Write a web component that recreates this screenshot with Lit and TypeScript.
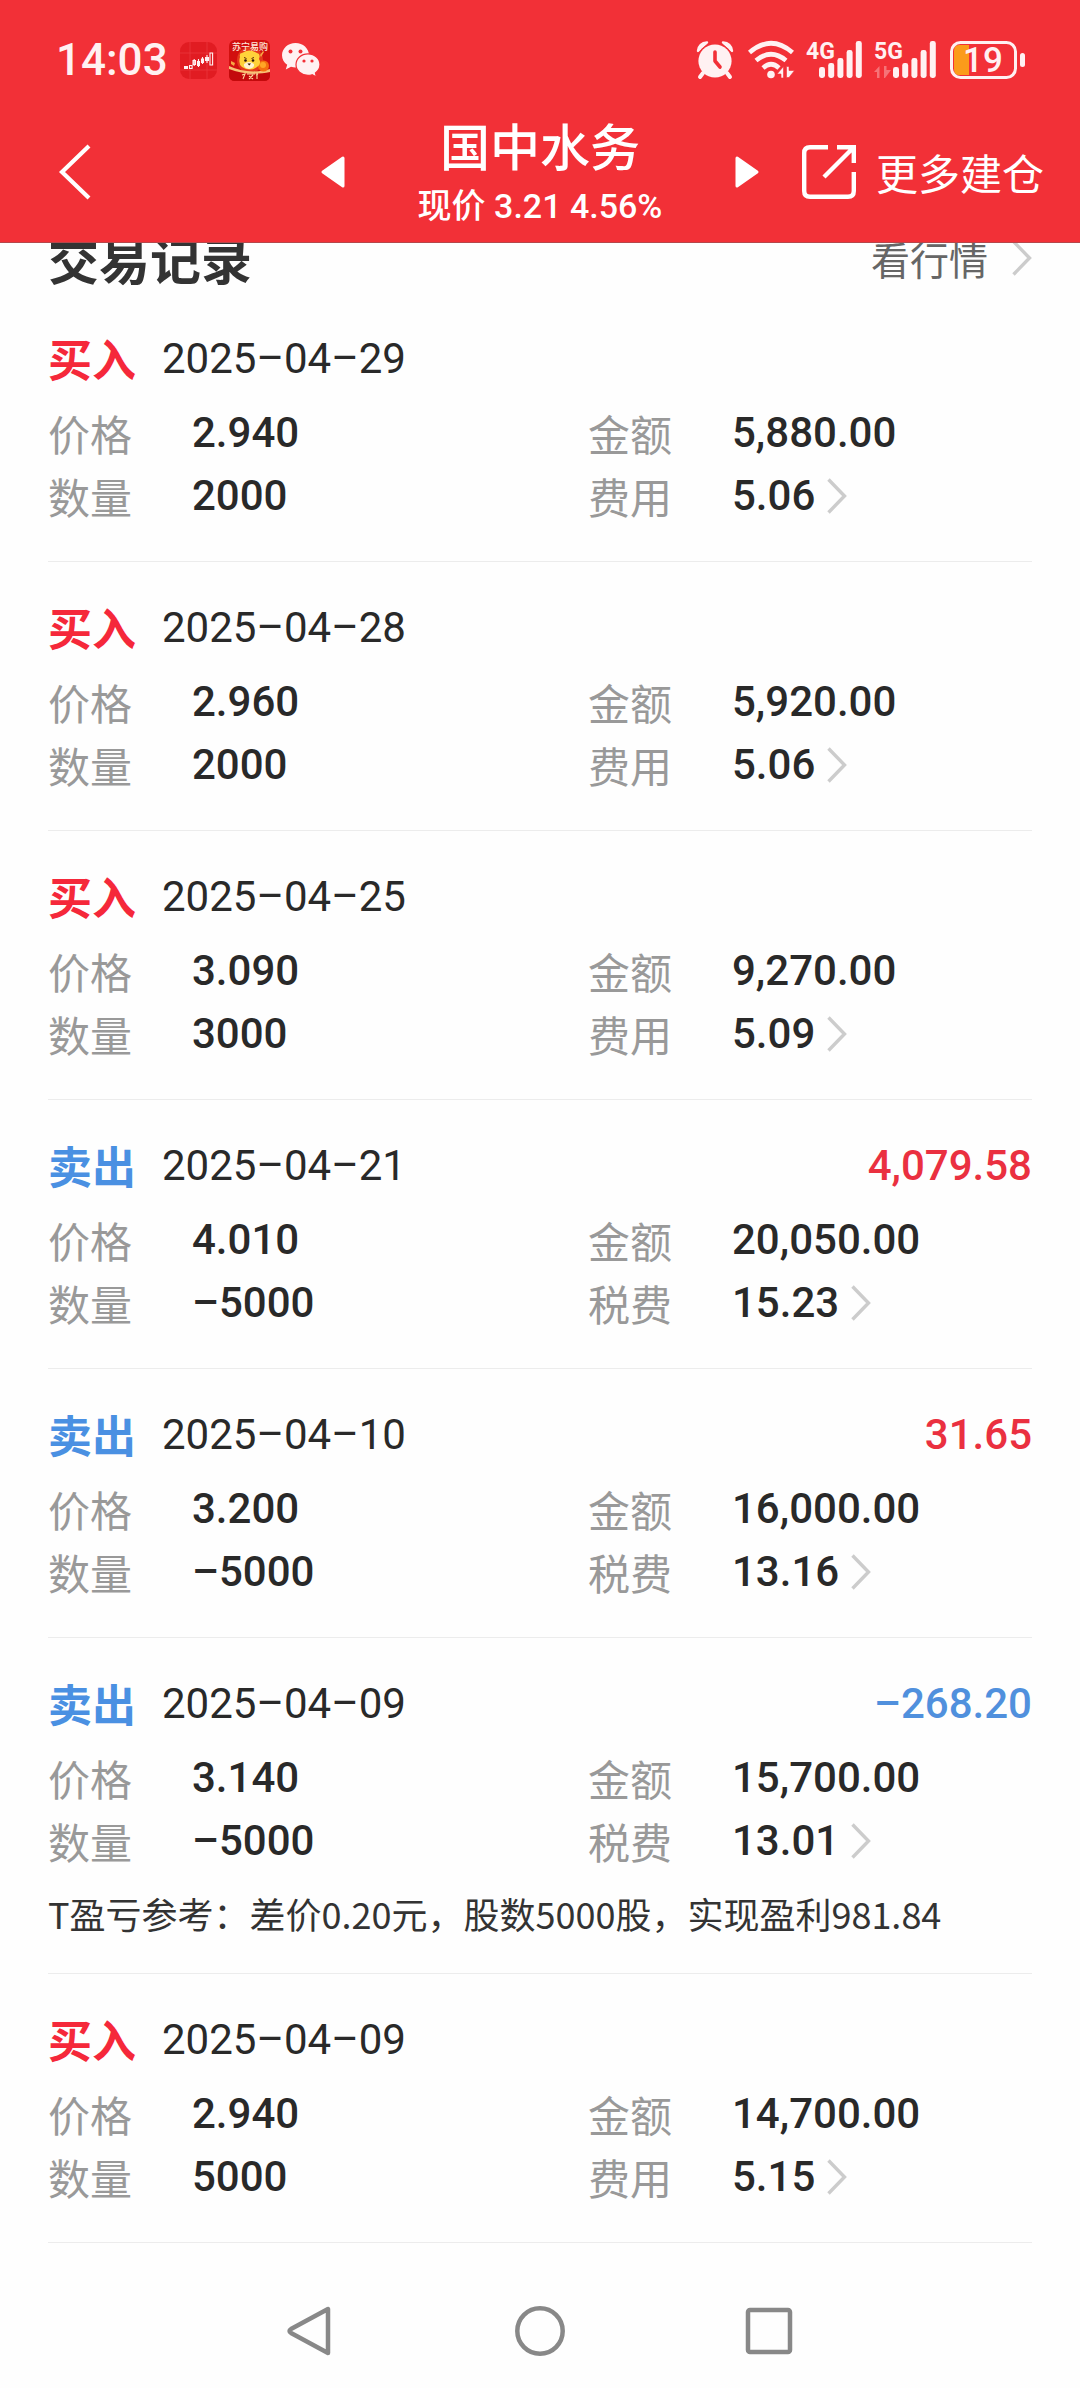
import { LitElement, html, css, svg, nothing } from "lit";
import { customElement, property } from "lit/decorators.js";
import { classMap } from "lit/directives/class-map.js";

interface Trade {
  side: "buy" | "sell";
  date: string;
  price: string;
  amount: string;
  quantity: string;
  fee: string;
  profit?: string;
  note?: string;
}

const TRADES: Trade[] = [
  { side: "buy", date: "2025–04–29", price: "2.940", amount: "5,880.00", quantity: "2000", fee: "5.06" },
  { side: "buy", date: "2025–04–28", price: "2.960", amount: "5,920.00", quantity: "2000", fee: "5.06" },
  { side: "buy", date: "2025–04–25", price: "3.090", amount: "9,270.00", quantity: "3000", fee: "5.09" },
  { side: "sell", date: "2025–04–21", price: "4.010", amount: "20,050.00", quantity: "–5000", fee: "15.23", profit: "4,079.58" },
  { side: "sell", date: "2025–04–10", price: "3.200", amount: "16,000.00", quantity: "–5000", fee: "13.16", profit: "31.65" },
  {
    side: "sell",
    date: "2025–04–09",
    price: "3.140",
    amount: "15,700.00",
    quantity: "–5000",
    fee: "13.01",
    profit: "–268.20",
    note: "T盈亏参考：差价0.20元，股数5000股，实现盈利981.84",
  },
  { side: "buy", date: "2025–04–09", price: "2.940", amount: "14,700.00", quantity: "5000", fee: "5.15" },
];

const chevron = () => html`
  <svg class="chevron" width="20" height="36" viewBox="0 0 20 36" aria-hidden="true">
    <path d="M1.5 1.5L17.5 18L1.5 34.5" fill="none" stroke="#ccc" stroke-width="3.4" />
  </svg>
`;

const signalBars = (x: number) =>
  [11, 15, 20, 28, 37].map(
    (h, i) => svg`<rect x=${x + i * 9.2} y=${37 - h} width="6" height=${h} rx="2.4" />`,
  );

@customElement("status-bar")
export class StatusBar extends LitElement {
  static styles = css`
    :host {
      display: flex;
      align-items: center;
      height: 109px;
      padding: 11px 54px 0 56px;
      box-sizing: border-box;
      color: #fff1f2;
      fill: currentColor;
      font-family: Roboto, "Noto Sans CJK SC", sans-serif;
    }
    svg {
      display: block;
      flex: none;
      overflow: visible;
    }
    .clock {
      font-size: 44px;
      line-height: 52px;
      font-weight: 500;
    }
    .group {
      display: flex;
      align-items: center;
      gap: 12px;
    }
    .apps {
      margin-left: 12px;
    }
    .system {
      margin-left: auto;
    }
    .small {
      font-size: 23px;
      font-weight: 700;
    }
    .level {
      font-size: 35px;
      font-weight: 500;
    }
    .brand {
      font-family: "Noto Sans CJK SC", sans-serif;
      font-size: 9px;
      font-weight: 500;
    }
  `;

  render() {
    return html`
      <span class="clock">14:03</span>
      <div class="group apps">
        <svg width="37" height="37" viewBox="0 0 37 37" aria-hidden="true">
          <rect width="37" height="37" rx="9" fill="#e11c22" />
          <path d="M10 0V37M27 0V37M0 11H37M0 28H37" stroke="#ec3a3f" stroke-width="0.7" />
          <path d="M4 24h4v3h-4zM17 19h3v5h-3zM25 15h4v4h-4z" />
          <path d="M9.5 23.5h2.6v3h-2.6zM13 18.5h2.5v4h-2.5zM14.2 17v7M18.5 17v8M21.5 17h2v3.5h-2zM22.5 15v7M27 13v8M30 11h2.6v12h-2.6z" fill="none" stroke="#fff1f2" stroke-width="1.1" />
        </svg>
        <svg width="41" height="41" viewBox="0 0 41 41" aria-hidden="true">
          <rect width="41" height="41" rx="6" fill="#d2100f" />
          <circle cx="21" cy="20" r="13" fill="#e43a1c" />
          <path d="M0 27C12 33 28 33 41 29V35Q41 41 35 41H6Q0 41 0 35Z" fill="#c30a0c" />
          <path d="M0 26C12 32 28 33 41 29V32C28 35 12 34 0 29Z" fill="#f8c274" />
          <circle cx="34.5" cy="26" r="5.5" fill="#f4700f" />
          <circle cx="34" cy="25" r="3" fill="#ffa526" />
          <path d="M2 21l4 2-1 3-3-2zM31 15l3-4 1 1-3 5z" fill="#f7a744" />
          <path d="M11 17Q10 13 13 13Q20 8 28 13Q32 14 30 19Q33 24 28 27Q21 32 13 27Q9 24 11 17Z" fill="#ffd23a" />
          <path d="M15 24Q20 20 25 24Q26 28 20 29Q14 28 15 24Z" fill="#fff3d2" />
          <path d="M15 17.5l2.5 1M25 17.5l-2.5 1" stroke="#5b2a06" stroke-width="1" />
          <circle cx="16.5" cy="20.5" r="1.3" fill="#2c1508" />
          <circle cx="24" cy="20.5" r="1.3" fill="#2c1508" />
          <path d="M18.5 23.5h3.5l-1.8 2z" fill="#2c1508" />
          <text class="brand" x="3" y="10" fill="#ffe9dc">苏宁易购</text>
          <path d="M13 35l3-1-2 5M18 34h8M20 36l4 3M24 35l-4 4M27 35l2-1M28 33v6" fill="none" stroke="#ffd79b" stroke-width="1.1" />
        </svg>
        <svg width="38" height="34" viewBox="0 0 38 34" aria-hidden="true">
          <path d="M13.5 0C6 0 0 5.5 0 12.3C0 16.3 2 19.6 5.2 21.8L3.8 26.6L9 23.8C10.4 24.2 12 24.5 13.5 24.5C21 24.5 27 19 27 12.3C27 5.5 21 0 13.5 0Z" />
          <path d="M26 10.8C19.2 10.8 14 15.6 14 21.6C14 27.6 19.2 32.3 26 32.3C27.5 32.3 28.8 32.1 30.1 31.7L34.5 34L33.4 30.1C36.2 28.1 38 25.1 38 21.6C38 15.6 32.8 10.8 26 10.8Z" stroke="#f23037" stroke-width="1.2" />
          <circle cx="8.5" cy="8.5" r="2" fill="#f23037" />
          <circle cx="18.5" cy="8.5" r="2" fill="#f23037" />
          <circle cx="22" cy="18" r="1.6" fill="#f23037" />
          <circle cx="30" cy="18" r="1.6" fill="#f23037" />
        </svg>
      </div>
      <div class="group system">
        <svg width="40" height="38" viewBox="0 0 40 38" aria-hidden="true">
          <path d="M2 10Q3 2 11 1.5Z" stroke="currentColor" stroke-width="2.4" stroke-linejoin="round" />
          <path d="M36 10Q35 2 27 1.5Z" stroke="currentColor" stroke-width="2.4" stroke-linejoin="round" />
          <circle cx="19" cy="20" r="18" fill="#f23037" />
          <path d="M7 32L4 36M31 32L34 36" stroke="currentColor" stroke-width="4" stroke-linecap="round" />
          <circle cx="19" cy="20" r="16.6" />
          <path d="M19 11V20L24 26" fill="none" stroke="#f23037" stroke-width="3.6" stroke-linecap="round" stroke-linejoin="round" />
        </svg>
        <svg width="46" height="38" viewBox="0 0 46 38" aria-hidden="true">
          <g fill="none" stroke="currentColor" stroke-width="4.6">
            <path d="M1.5 11.5Q23 -7 44.5 11.5" />
            <path d="M8 19.5Q23 7 38 19.5" />
            <path d="M15 27Q23 19.5 31 27" />
          </g>
          <circle cx="23" cy="33.5" r="3.8" />
          <path d="M29 33L35.5 25.5V37H33V33ZM38.5 25.5H41V29.5H46.5L41 36.5H38.5Z" stroke="#f23037" stroke-width="0.6" />
        </svg>
        <svg width="56" height="38" viewBox="0 0 56 38" aria-label="4G">
          <text class="small" x="0" y="18">4G</text>
          ${signalBars(13)}
        </svg>
        <svg width="64" height="38" viewBox="0 0 64 38" aria-label="5G">
          <text class="small" x="0" y="18">5G</text>
          <path d="M0 31L5.5 25V37H3V31ZM10 25H12.5V29H17L11 37H10Z" opacity="0.35" />
          ${signalBars(19)}
        </svg>
        <svg width="76" height="38" viewBox="0 0 76 38" aria-label="19%">
          <path d="M9 4H19V34H9Q4 34 4 28V10Q4 4 9 4Z" fill="#fb9b1b" />
          <rect x="1.5" y="1.5" width="64" height="35" rx="9" fill="none" stroke="currentColor" stroke-width="3" />
          <rect x="70" y="12" width="5" height="14" rx="2.5" />
          <text class="level" x="33" y="31" text-anchor="middle">19</text>
        </svg>
      </div>
    `;
  }
}

@customElement("stock-header")
export class StockHeader extends LitElement {
  static styles = css`
    :host {
      display: grid;
      grid-template-columns: 1fr auto 1fr;
      align-items: center;
      padding: 0 36px 8px;
      color: #fff;
      font-family: "Noto Sans CJK SC", sans-serif;
    }
    svg {
      display: block;
      flex: none;
    }
    button,
    a {
      display: flex;
      align-items: center;
      padding: 0;
      border: 0;
      background: none;
      color: inherit;
      font: inherit;
      text-decoration: none;
    }
    .back {
      padding: 0 22px;
    }
    .switcher {
      display: flex;
      align-items: center;
      gap: 73px;
    }
    .stock {
      text-align: center;
    }
    h1 {
      margin: 0;
      font-size: 50px;
      line-height: 70px;
      font-weight: 500;
    }
    p {
      margin: 0;
      font-family: Roboto, "Noto Sans CJK SC", sans-serif;
      font-size: 34px;
      line-height: 55px;
      font-weight: 500;
      white-space: nowrap;
    }
    .more {
      justify-self: end;
      gap: 20px;
      font-size: 42px;
      line-height: 60px;
      white-space: nowrap;
    }
  `;

  render() {
    return html`
      <button class="back" aria-label="返回">
        <svg width="34" height="56" viewBox="0 0 34 56">
          <path d="M31 2L4 28L31 54" fill="none" stroke="currentColor" stroke-width="4.2" />
        </svg>
      </button>
      <div class="switcher">
        <button aria-label="上一只">
          <svg width="24" height="32" viewBox="0 0 24 32">
            <path d="M2 16L22 2V30Z" fill="currentColor" stroke="currentColor" stroke-width="3" stroke-linejoin="round" />
          </svg>
        </button>
        <div class="stock">
          <h1>国中水务</h1>
          <p>现价 3.21 4.56%</p>
        </div>
        <button aria-label="下一只">
          <svg width="24" height="32" viewBox="0 0 24 32">
            <path d="M22 16L2 2V30Z" fill="currentColor" stroke="currentColor" stroke-width="3" stroke-linejoin="round" />
          </svg>
        </button>
      </div>
      <a class="more" href="#">
        <svg width="54" height="54" viewBox="0 0 54 54" fill="none" stroke="currentColor" stroke-width="4.4">
          <path d="M26 2.2H8Q2.2 2.2 2.2 8V46Q2.2 51.8 8 51.8H46Q51.8 51.8 51.8 46V27" />
          <path d="M35 2.2H51.8V18M51 3L22 32" />
        </svg>
        <span>更多建仓</span>
      </a>
    `;
  }
}

@customElement("trade-record")
export class TradeRecord extends LitElement {
  static styles = css`
    :host {
      display: block;
      padding: 34px 0;
      border-bottom: 1px solid #ececec;
      color: #292929;
      font-family: Roboto, "Noto Sans CJK SC", sans-serif;
      font-size: 42px;
      line-height: 63px;
    }
    h3,
    dt,
    .note {
      font-family: "Noto Sans CJK SC", sans-serif;
    }
    .head {
      display: flex;
      align-items: center;
      margin-bottom: 11px;
    }
    h3 {
      margin: 0 26px 0 0;
      font-size: 44px;
      font-weight: 700;
    }
    .buy {
      color: #f5283a;
    }
    .sell {
      color: #4a90e2;
    }
    .profit {
      margin-left: auto;
      font-weight: 500;
    }
    .up {
      color: #ea3040;
    }
    .down {
      color: #5090dd;
    }
    dl {
      display: grid;
      grid-template-columns: calc(50% + 48px) 1fr;
      margin: 0;
    }
    .cell {
      display: flex;
      align-items: center;
    }
    dt {
      width: 144px;
      color: #999;
    }
    dd {
      margin: 0;
      font-weight: 500;
    }
    button {
      display: flex;
      align-items: center;
      gap: 12px;
      padding: 0;
      border: 0;
      background: none;
      color: inherit;
      font: inherit;
    }
    .note {
      margin: 15px 0 0;
      font-size: 36px;
      line-height: 52px;
      color: #333;
    }
  `;

  @property({ attribute: false }) trade!: Trade;

  render() {
    const t = this.trade;
    const buy = t.side === "buy";
    const down = t.profit?.startsWith("–") ?? false;
    return html`
      <div class="head">
        <h3 class=${t.side}>${buy ? "买入" : "卖出"}</h3>
        <time>${t.date}</time>
        ${t.profit ? html`<span class=${classMap({ profit: true, down, up: !down })}>${t.profit}</span>` : nothing}
      </div>
      <dl>
        <div class="cell"><dt>价格</dt><dd>${t.price}</dd></div>
        <div class="cell"><dt>金额</dt><dd>${t.amount}</dd></div>
        <div class="cell"><dt>数量</dt><dd>${t.quantity}</dd></div>
        <div class="cell">
          <dt>${buy ? "费用" : "税费"}</dt>
          <dd><button>${t.fee}${chevron()}</button></dd>
        </div>
      </dl>
      ${t.note ? html`<p class="note">${t.note}</p>` : nothing}
    `;
  }
}

@customElement("system-nav")
export class SystemNav extends LitElement {
  static styles = css`
    :host {
      display: flex;
      justify-content: center;
      gap: 180px;
      padding: 63px 0 32px;
    }
    button {
      padding: 0;
      border: 0;
      background: none;
    }
    svg {
      display: block;
      fill: none;
      stroke: #888;
      stroke-width: 4.5;
      stroke-linejoin: round;
    }
  `;

  render() {
    return html`
      <button aria-label="返回">
        <svg width="50" height="50" viewBox="0 0 50 50"><path d="M43 3V47L6 27Q3 25 6 23Z" /></svg>
      </button>
      <button aria-label="主页">
        <svg width="50" height="50" viewBox="0 0 50 50"><circle cx="25" cy="25" r="22.7" /></svg>
      </button>
      <button aria-label="最近任务">
        <svg width="50" height="50" viewBox="0 0 50 50"><rect x="3" y="4" width="42" height="42" rx="2" /></svg>
      </button>
    `;
  }
}

@customElement("app-root")
export class AppRoot extends LitElement {
  static styles = css`
    :host {
      display: block;
      min-height: 100vh;
      background: #fefefe;
      font-family: "Noto Sans CJK SC", sans-serif;
    }
    .top {
      position: sticky;
      top: 0;
      z-index: 1;
      background: #f23037;
      border-bottom: 1px solid #b5474b;
    }
    main {
      margin-top: -20px;
      padding: 0 48px;
    }
    .title {
      display: flex;
      align-items: center;
      justify-content: space-between;
      line-height: 70px;
    }
    h2 {
      margin: 0;
      font-size: 51px;
      font-weight: 700;
      color: #333;
    }
    a {
      display: flex;
      align-items: center;
      gap: 24px;
      font-size: 39px;
      color: #666;
      text-decoration: none;
    }
  `;

  render() {
    return html`
      <div class="top">
        <status-bar></status-bar>
        <stock-header></stock-header>
      </div>
      <main>
        <div class="title">
          <h2>交易记录</h2>
          <a href="#">看行情${chevron()}</a>
        </div>
        ${TRADES.map((t) => html`<trade-record .trade=${t}></trade-record>`)}
      </main>
      <system-nav></system-nav>
    `;
  }
}
